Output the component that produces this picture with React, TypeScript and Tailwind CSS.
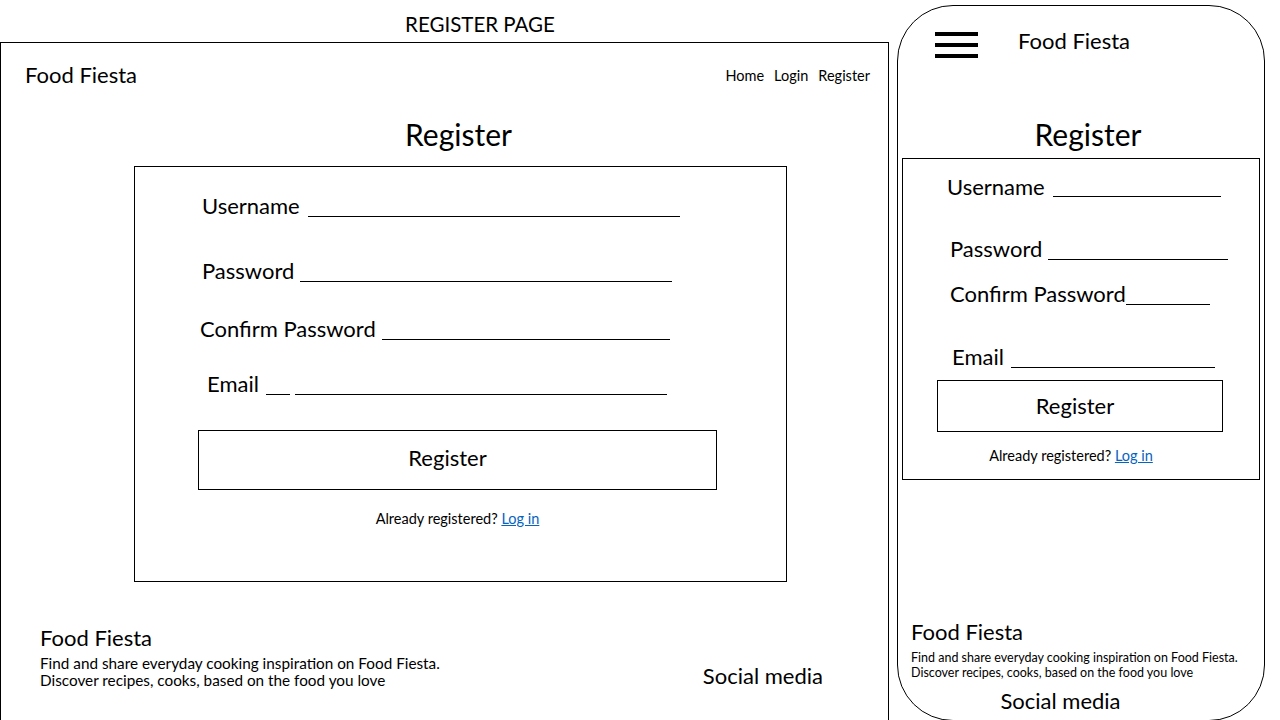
import React from "react";

const CAL = "font-['Lato',_'Liberation_Sans',_sans-serif]";

function Field({
  label,
  labelW,
  labelX,
  lineW,
  mt,
  mb,
  extra,
}: {
  label: string;
  labelW: number;
  labelX: number;
  lineW: number;
  mt: number;
  mb: number;
  extra?: React.ReactNode;
}) {
  return (
    <div className="flex items-end h-[28px]" style={{ marginTop: mt, paddingLeft: labelX }}>
      <span className="text-[22px] leading-[28px] whitespace-nowrap" style={{ width: labelW }}>
        {label}
      </span>
      {extra}
      <span className="h-px bg-black" style={{ width: lineW, marginBottom: mb }} />
    </div>
  );
}

export default function App() {
  return (
    <div className={`w-[1280px] h-[720px] overflow-hidden bg-white text-black flex ${CAL}`}>
      {/* Desktop wireframe */}
      <div className="w-[889px] flex flex-col shrink-0">
        <div className="h-[43px] flex items-center justify-center pl-[71px]">
          <span className="text-[20.5px] leading-none pt-[6px]">REGISTER PAGE</span>
        </div>
        <div className="h-[700px] border-l border-t border-r border-black flex flex-col">
          <div className="h-[65px] flex items-center justify-between pl-[24px] pr-[18px]">
            <span className="text-[22px] leading-[28px]">Food Fiesta</span>
            <nav className="flex gap-[10px] text-[14.5px] pt-[1px]">
              <span>Home</span>
              <span>Login</span>
              <span>Register</span>
            </nav>
          </div>
          <h1 className="mt-[8px] text-[30px] leading-[36px] text-center pl-[28px]">Register</h1>
          <div className="mt-[14px] ml-[133px] w-[653px] h-[416px] border border-black flex flex-col">
            <Field label="Username" labelW={106} labelX={67} lineW={372} mt={25} mb={3} />
            <Field label="Password" labelW={98} labelX={67} lineW={372} mt={37} mb={3} />
            <Field label="Confirm Password" labelW={182} labelX={65} lineW={288} mt={30} mb={3} />
            <Field
              label="Email"
              labelW={59}
              labelX={72}
              lineW={372}
              mt={27}
              mb={3}
              extra={<span className="h-px w-[24px] bg-black mb-[3px] mr-[5px]" />}
            />
            <div className="mt-[32px] ml-[63px] w-[519px] h-[60px] border border-black flex items-center justify-center pr-[20px] pb-[4px]">
              <span className="text-[22px]">Register</span>
            </div>
            <p className="mt-[19px] text-[14.5px] leading-[20px] text-center pr-[6px]">
              Already registered?{" "}
              <a className="text-[#0563C1] underline" href="#">
                Log in
              </a>
            </p>
          </div>
          <div className="mt-[42px] flex justify-between pl-[39px] pr-[65px]">
            <div className="flex flex-col">
              <span className="text-[22px] leading-[28px]">Food Fiesta</span>
              <span className="mt-[3px] text-[15.3px] leading-[17px]">
                Find and share everyday cooking inspiration on Food Fiesta.
              </span>
              <span className="text-[15.3px] leading-[17px]">Discover recipes, cooks, based on the food you love</span>
            </div>
            <span className="mt-[38px] text-[22px] leading-[28px]">Social media</span>
          </div>
        </div>
      </div>

      {/* Mobile wireframe */}
      <div className="ml-[8px] mt-[5px] w-[368px] h-[716px] shrink-0 border border-black rounded-[56px] flex flex-col">
        <div className="flex items-center h-[70px] pl-[37px]">
          <div className="flex flex-col gap-[7px] w-[43px] mt-[8px]">
            <span className="h-[4px] bg-black" />
            <span className="h-[4px] bg-black" />
            <span className="h-[4px] bg-black" />
          </div>
          <span className="ml-[40px] text-[22px] leading-[28px]">Food Fiesta</span>
        </div>
        <h1 className="mt-[40px] text-[30px] leading-[36px] text-center pl-[14px]">Register</h1>
        <div className="mt-[6px] ml-[4px] w-[358px] h-[322px] border border-black flex flex-col">
          <Field label="Username" labelW={106} labelX={44} lineW={168} mt={14} mb={4} />
          <Field label="Password" labelW={98} labelX={47} lineW={180} mt={34} mb={3} />
          <Field label="Confirm Password" labelW={176} labelX={47} lineW={84} mt={17} mb={3} />
          <Field label="Email" labelW={59} labelX={49} lineW={204} mt={35} mb={3} />
          <div className="mt-[9px] ml-[34px] w-[286px] h-[52px] border border-black flex items-center justify-center pr-[10px] pb-[2px]">
            <span className="text-[22px]">Register</span>
          </div>
          <p className="mt-[14px] text-[14.5px] leading-[20px] text-center pr-[20px]">
            Already registered?{" "}
            <a className="text-[#0563C1] underline" href="#">
              Log in
            </a>
          </p>
        </div>
        <div className="mt-[138px] pl-[13px] flex flex-col">
          <span className="text-[22px] leading-[28px]">Food Fiesta</span>
          <span className="mt-[4px] text-[12.5px] leading-[15px]">
            Find and share everyday cooking inspiration on Food Fiesta.
          </span>
          <span className="text-[12.5px] leading-[15px]">Discover recipes, cooks, based on the food you love</span>
          <span className="mt-[7px] text-[22px] leading-[28px] text-center pr-[54px]">Social media</span>
        </div>
      </div>
    </div>
  );
}
